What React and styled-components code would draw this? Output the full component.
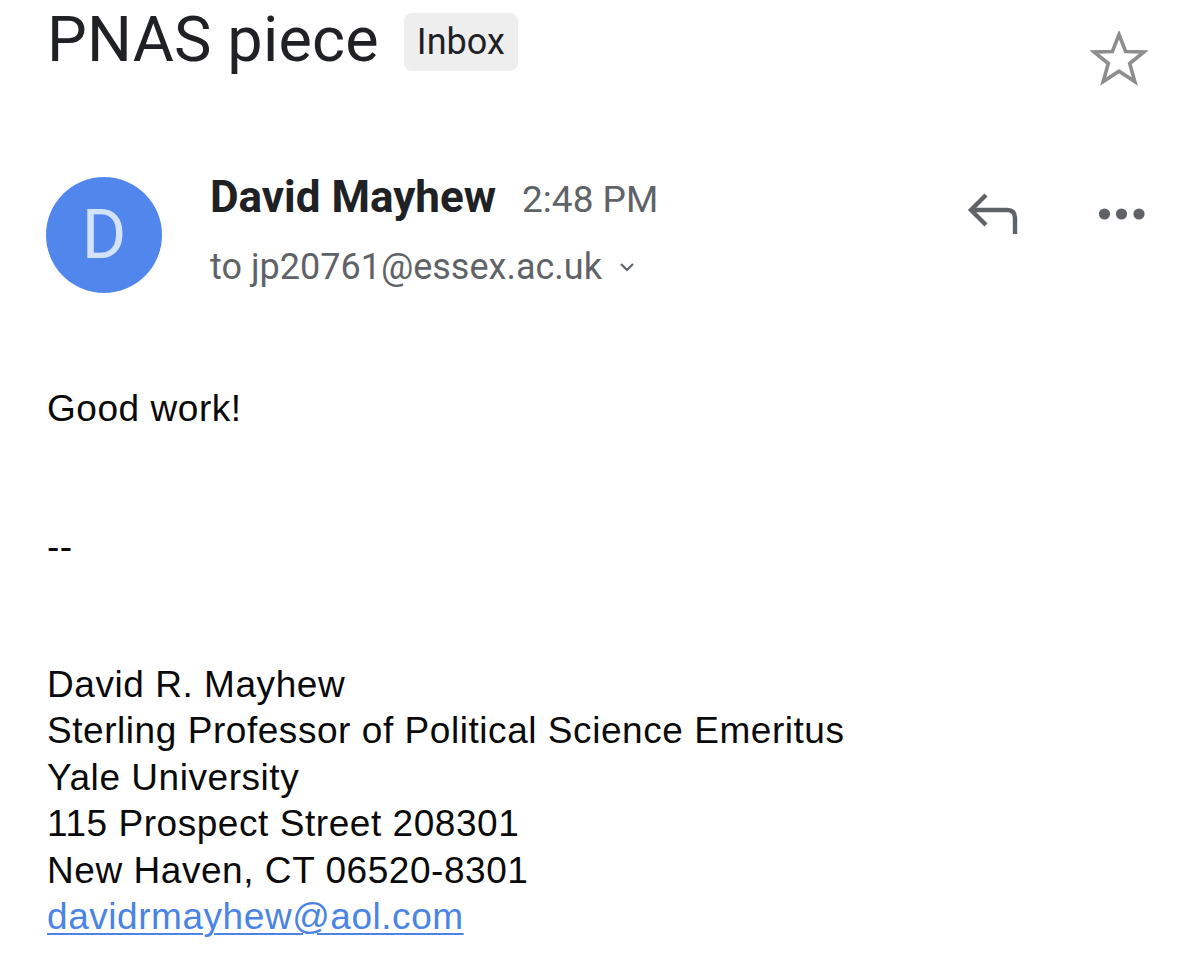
import React from "react";
import styled, { createGlobalStyle } from "styled-components";

const Global = createGlobalStyle`
  html, body { margin: 0; padding: 0; background: #ffffff; }
  body { font-family: Roboto, "Liberation Sans", Arial, sans-serif; -webkit-font-smoothing: antialiased; }
`;

const Page = styled.div`
  width: 1200px;
  height: 957px;
  box-sizing: border-box;
  padding: 8px 54px 0 47px;
  overflow: hidden;
`;

const Header = styled.header`
  display: flex;
  align-items: flex-start;
  height: 63px;
`;

const Title = styled.h1`
  margin: 0;
  font-family: Roboto, "Liberation Sans", Arial, sans-serif;
  font-weight: 400;
  font-size: 63px;
  line-height: 63px;
  color: #202124;
  letter-spacing: 0.2px;
`;

const Badge = styled.span`
  margin: 5px 0 0 25px;
  height: 58px;
  padding: 0 13px;
  display: inline-flex;
  align-items: center;
  background: #eeeeee;
  border-radius: 8px;
  font-size: 36px;
  color: #202124;
`;

const Spacer = styled.div`
  flex: 1;
`;

const IconButton = styled.button`
  border: 0;
  background: none;
  padding: 0;
  margin: ${(p) => p.$m || "0"};
  display: flex;
  align-items: center;
  justify-content: center;
  width: ${(p) => p.$w}px;
  height: ${(p) => p.$h}px;
  color: ${(p) => p.$color || "#5f6368"};
  cursor: pointer;
`;

const SenderRow = styled.section`
  display: flex;
  align-items: flex-start;
  margin-top: 106px;
  margin-left: -1px;
`;

const Avatar = styled.div`
  width: 116px;
  height: 116px;
  border-radius: 50%;
  background: #5186ec;
  color: #d4e3fb;
  display: flex;
  align-items: center;
  justify-content: center;
  font-size: 68px;
  font-weight: 400;
  flex-shrink: 0;
`;

const SenderInfo = styled.div`
  display: flex;
  flex-direction: column;
  margin-left: 48px;
  margin-top: -2px;
  gap: 27px;
`;

const NameLine = styled.div`
  display: flex;
  align-items: baseline;
  gap: 26px;
  line-height: 44px;
`;

const Name = styled.span`
  font-size: 44px;
  font-weight: 700;
  color: #202124;
`;

const Meta = styled.span`
  font-size: 37px;
  color: #5f6368;
`;

const ToLine = styled.div`
  display: flex;
  align-items: center;
  gap: 17px;
  font-size: 36px;
  line-height: 36px;
  color: #5f6368;
`;

const Actions = styled.div`
  margin-left: auto;
  display: flex;
  align-items: center;
  gap: 76px;
  margin-top: 15px;
`;

const Body = styled.main`
  margin-top: 93px;
  font-family: "Liberation Sans", Arial, sans-serif;
  font-size: 37px;
  letter-spacing: 0.55px;
  line-height: 46px;
  color: #0a0a0a;
`;

const Para = styled.p`
  margin: 0 0 ${(p) => (p.$gap ? p.$gap : 0)}px 0;
`;

const Signature = styled.div`
  display: flex;
  flex-direction: column;
  line-height: 46.4px;
`;

const Link = styled.a`
  color: #4a84e4;
  text-decoration: underline;
  text-decoration-thickness: 2px;
  text-underline-offset: 4px;
`;

const StarIcon = () => (
  <svg width="58" height="56" viewBox="0 0 58 56">
    <polygon
      points="29,3.5 35.6,20.5 54,21 39.7,32.5 44.8,50.5 29,40.2 13.2,50.5 18.3,32.5 4,21 22.4,20.5"
      fill="none"
      stroke="currentColor"
      strokeWidth="3.6"
      strokeLinejoin="miter"
    />
  </svg>
);

const ReplyIcon = () => (
  <svg width="56" height="44" viewBox="0 0 56 44">
    <path
      d="M20 3 L5 18 L20 33 M5 18 H41 Q49 18 49 26 V42"
      fill="none"
      stroke="currentColor"
      strokeWidth="4.4"
      strokeLinejoin="miter"
    />
  </svg>
);

const MoreIcon = () => (
  <svg width="48" height="14" viewBox="0 0 48 14">
    <circle cx="6.5" cy="7" r="5.6" fill="currentColor" />
    <circle cx="23.5" cy="7" r="5.6" fill="currentColor" />
    <circle cx="41" cy="7" r="5.6" fill="currentColor" />
  </svg>
);

const Chevron = () => (
  <svg width="16" height="10" viewBox="0 0 16 10">
    <path d="M2 2 L8 8 L14 2" fill="none" stroke="#5f6368" strokeWidth="2.2" />
  </svg>
);

const signature = [
  "David R. Mayhew",
  "Sterling Professor of Political Science Emeritus",
  "Yale University",
  "115 Prospect Street 208301",
  "New Haven, CT 06520-8301",
];

export default function App() {
  return (
    <>
      <Global />
      <Page>
        <Header>
          <Title>PNAS piece</Title>
          <Badge>Inbox</Badge>
          <Spacer />
          <IconButton $w={58} $h={56} $m="23px -2px 0 0" $color="#8d8d8d" aria-label="Star">
            <StarIcon />
          </IconButton>
        </Header>
        <SenderRow>
          <Avatar>D</Avatar>
          <SenderInfo>
            <NameLine>
              <Name>David Mayhew</Name>
              <Meta>2:48 PM</Meta>
            </NameLine>
            <ToLine>
              <span>to jp20761@essex.ac.uk</span>
              <Chevron />
            </ToLine>
          </SenderInfo>
          <Actions>
            <IconButton $w={56} $h={44} aria-label="Reply">
              <ReplyIcon />
            </IconButton>
            <IconButton $w={48} $h={14} aria-label="More">
              <MoreIcon />
            </IconButton>
          </Actions>
        </SenderRow>
        <Body>
          <Para $gap={92}>Good work!</Para>
          <Para $gap={92}>--</Para>
          <Signature>
            {signature.map((l) => (
              <span key={l}>{l}</span>
            ))}
            <span>
              <Link href="#">davidrmayhew@aol.com</Link>
            </span>
          </Signature>
        </Body>
      </Page>
    </>
  );
}
